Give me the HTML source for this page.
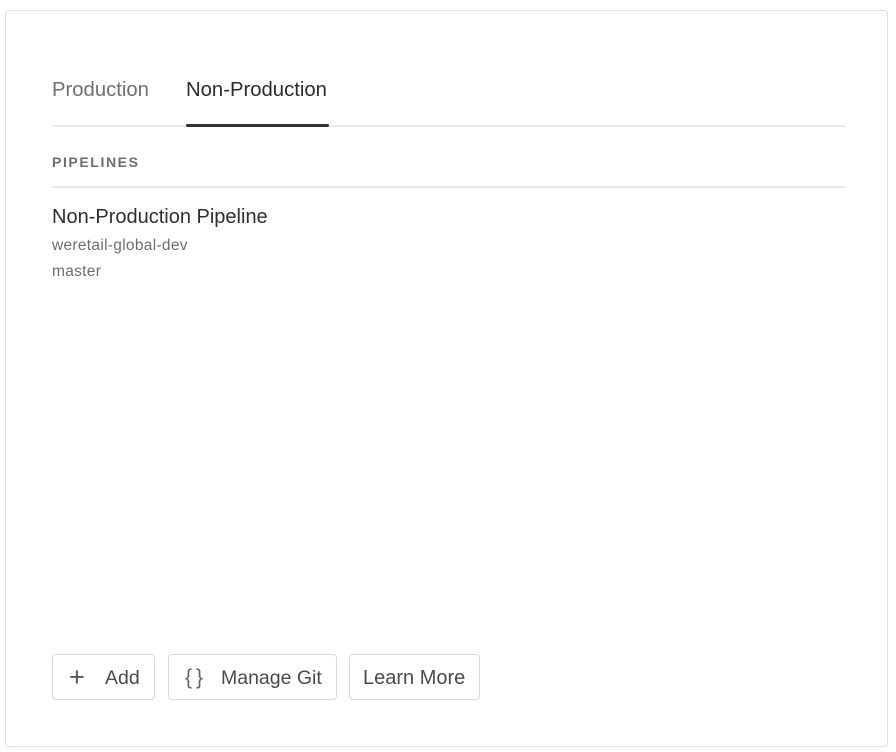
<!DOCTYPE html>
<html><head><style>
body{margin:0;background:#fff;font-family:"Liberation Sans",sans-serif;}
.card{position:absolute;left:5px;top:10px;width:883px;height:737px;border:1px solid #dedede;border-radius:4px;box-sizing:border-box;}
.t{position:absolute;white-space:nowrap;}
.btn{position:absolute;top:654px;height:46px;border:1px solid #dadada;border-radius:4px;box-sizing:border-box;font-size:19.5px;color:#4b4b4b;line-height:46px;}
</style></head><body>
<div class="card"></div>
<div class="t" style="left:52px;top:79px;font-size:20.3px;color:#707070">Production</div>
<div class="t" style="left:186px;top:79px;font-size:20.3px;color:#2c2c2c">Non-Production</div>
<div style="position:absolute;left:52px;top:125px;width:794px;height:2px;background:#eaeaea"></div>
<div style="position:absolute;left:186px;top:124px;width:143px;height:3px;background:#323232;border-radius:2px"></div>
<div class="t" style="left:52px;top:154px;font-size:14px;font-weight:bold;letter-spacing:1.6px;color:#6e6e6e">PIPELINES</div>
<div style="position:absolute;left:52px;top:186px;width:794px;height:2px;background:#e8e8e8"></div>
<div class="t" style="left:52px;top:206px;font-size:20px;color:#2f2f2f">Non-Production Pipeline</div>
<div class="t" style="left:52px;top:237px;font-size:15.5px;letter-spacing:0.3px;color:#6e6e6e">weretail-global-dev</div>
<div class="t" style="left:52px;top:263px;font-size:15.5px;letter-spacing:0.3px;color:#6e6e6e">master</div>
<div class="btn" style="left:52px;width:103px"><span style="position:absolute;left:16px;top:-1px;font-size:27px;color:#555">+</span><span style="position:absolute;left:52px">Add</span></div>
<div class="btn" style="left:168px;width:169px"><span style="position:absolute;left:16px;font-size:21px;color:#666;letter-spacing:4px">{}</span><span style="position:absolute;left:52px">Manage Git</span></div>
<div class="btn" style="left:349px;width:131px"><span style="position:absolute;left:13px;font-size:20px">Learn More</span></div>
</body></html>
